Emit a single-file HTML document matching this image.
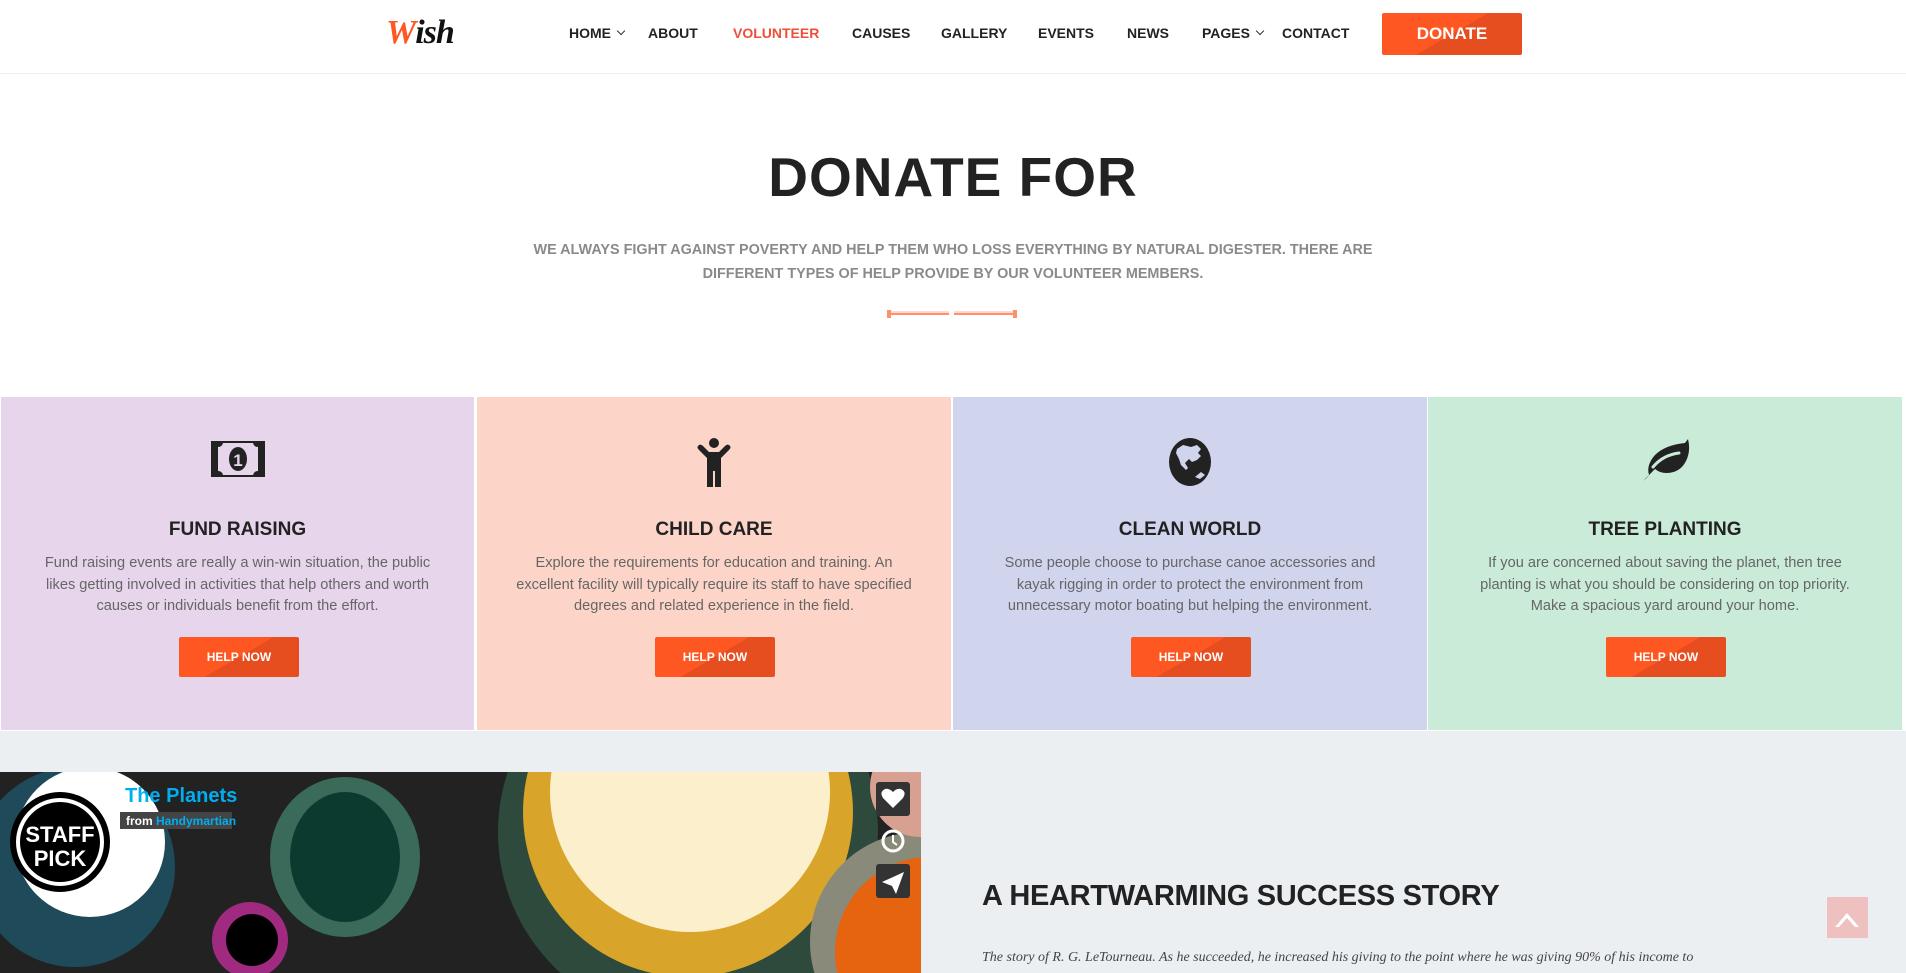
<!DOCTYPE html>
<html><head><meta charset="utf-8"><style>
*{margin:0;padding:0;box-sizing:border-box}
html,body{width:1906px;height:973px;overflow:hidden}
body{background:#fff;font-family:"Liberation Sans",sans-serif;position:relative}
.nav{position:absolute;top:0;left:0;width:1906px;height:74px;border-bottom:1px solid #eee;background:#fff}
.logo{position:absolute;left:386px;top:14px;font:italic bold 34px "Liberation Serif",serif;letter-spacing:-1px;color:#111}
.logo b{color:#ff5722}
.nav a{position:absolute;top:25px;font-weight:bold;font-size:14px;color:#222;text-decoration:none}
.nav a.act{color:#f04e3a}
.caret{display:inline-block;width:6px;height:6px;border-right:1.5px solid #333;border-bottom:1.5px solid #333;transform:rotate(45deg);margin-left:7px;position:relative;top:-4px}
.btn{background:linear-gradient(150deg,#ff5722 0%,#ff5722 50%,#e64d1f 50%,#e64d1f 100%);color:#fff;font-weight:bold;text-align:center;border-radius:2px;position:absolute}
h1{position:absolute;top:145px;left:0;width:1906px;text-align:center;font-size:55px;font-weight:bold;color:#222;letter-spacing:1px}
.sub{position:absolute;top:238px;left:530px;width:846px;text-align:center;font-size:14.4px;font-weight:bold;color:#8a8a8a;line-height:24px}
.card{position:absolute;top:397px;height:333px;width:474px;text-align:center}
.card svg{position:absolute;left:50%;top:40px;transform:translateX(-50%)}
.ct{position:absolute;top:122px;width:100%;font-size:19px;font-weight:bold;color:#222}
.cp{position:absolute;top:156px;left:38px;right:38px;font-size:14.6px;line-height:21.5px;color:#666}
.cb{left:178px;top:240px;width:120px;height:40px;line-height:40px;font-size:12px}
.bottom{position:absolute;top:731px;left:0;width:1906px;height:242px;background:#eceff2;overflow:hidden}
</style></head><body>
<div class="nav">
<div class="logo"><b>W</b>ish</div>
<a style="left:569px">HOME<span class="caret"></span></a>
<a style="left:648px">ABOUT</a>
<a class="act" style="left:733px">VOLUNTEER</a>
<a style="left:852px">CAUSES</a>
<a style="left:941px">GALLERY</a>
<a style="left:1038px">EVENTS</a>
<a style="left:1127px">NEWS</a>
<a style="left:1202px">PAGES<span class="caret"></span></a>
<a style="left:1282px">CONTACT</a>
<div class="btn" style="left:1382px;top:13px;width:140px;height:42px;line-height:42px;font-size:17px">DONATE</div>
</div>
<h1>DONATE FOR</h1>
<div class="sub">WE ALWAYS FIGHT AGAINST POVERTY AND HELP THEM WHO LOSS EVERYTHING BY NATURAL DIGESTER. THERE ARE DIFFERENT TYPES OF HELP PROVIDE BY OUR VOLUNTEER MEMBERS.</div>
<svg style="position:absolute;left:887px;top:309px" width="130" height="10"><path d="M1 1v8M3 1v8M4 5h58M67 5h59M127 1v8M129 1v8" stroke="#ff6a3d" stroke-width="1.5"/><path d="M4 3h58M67 3h59" stroke="#ffb59d" stroke-width="1"/></svg>

<div class="card" style="left:0;background:#e7d5ec;border-left:1px solid #fff">
<svg width="56" height="44" viewBox="0 0 56 44"><rect x="1" y="4" width="54" height="36" fill="#222"/><path d="M8 10q4 0 5-4h30q1 4 5 4v24q-4 0-5 4H13q-1-4-5-4z" fill="#e7d5ec"/><ellipse cx="28" cy="22" rx="9" ry="12" fill="#222"/><text x="28" y="29" font-size="17" font-weight="bold" text-anchor="middle" fill="#e7d5ec" font-family="Liberation Sans">1</text></svg>
<div class="ct">FUND RAISING</div>
<div class="cp">Fund raising events are really a win-win situation, the public likes getting involved in activities that help others and worth causes or individuals benefit from the effort.</div>
<div class="btn cb">HELP NOW</div></div>

<div class="card" style="left:477px;background:#fdd5c8">
<svg width="36" height="52" viewBox="0 0 36 52"><circle cx="18" cy="6" r="5" fill="#222"/><path d="M3 8q-3 2 0 5l8 8v29h6V34h2v16h6V21l8-8q3-3 0-5-2-1-4 1l-6 6H13L7 9Q5 7 3 8z" fill="#222"/></svg>
<div class="ct">CHILD CARE</div>
<div class="cp">Explore the requirements for education and training. An excellent facility will typically require its staff to have specified degrees and related experience in the field.</div>
<div class="btn cb">HELP NOW</div></div>

<div class="card" style="left:953px;background:#d0d4ed">
<svg width="46" height="50" viewBox="0 0 46 50"><ellipse cx="23" cy="25" rx="21" ry="24" fill="#222"/><path d="M10 12l6-4 8 2 6-2 4 4-3 4 3 3-4 4-5 2-3-3-4 4 3 5-2 2-5-5-2-6-3-6z" fill="#d0d4ed"/><path d="M28 40l6-5 4 3-5 4z" fill="#d0d4ed"/></svg>
<div class="ct">CLEAN WORLD</div>
<div class="cp">Some people choose to purchase canoe accessories and kayak rigging in order to protect the environment from unnecessary motor boating but helping the environment.</div>
<div class="btn cb">HELP NOW</div></div>

<div class="card" style="left:1428px;background:#c9ebd8">
<svg width="52" height="46" viewBox="0 0 52 46"><path d="M4 44l6-6q-3-10 6-20 10-10 30-12l3-4q3 12-2 22-6 12-20 12-6 0-11-4l-5 5q-3 4-7 7z" fill="#222"/><path d="M14 30q10-12 26-14" stroke="#c9ebd8" stroke-width="3" fill="none" stroke-linecap="round"/></svg>
<div class="ct">TREE PLANTING</div>
<div class="cp">If you are concerned about saving the planet, then tree planting is what you should be considering on top priority. Make a spacious yard around your home.</div>
<div class="btn cb">HELP NOW</div></div>

<div class="bottom">
<svg style="position:absolute;left:0;top:41px" width="921" height="201">
<rect width="921" height="201" fill="#222"/>
<circle cx="75" cy="95" r="100" fill="#1e4a5a"/><circle cx="90" cy="70" r="75" fill="#fff"/>
<ellipse cx="345" cy="85" rx="75" ry="80" fill="#3a6b5a"/><ellipse cx="345" cy="85" rx="55" ry="65" fill="#0d3a2e"/>
<circle cx="250" cy="168" r="38" fill="#a02a80"/><circle cx="252" cy="168" r="26" fill="#000"/>
<circle cx="688" cy="60" r="190" fill="#2e4a3c"/><circle cx="688" cy="40" r="165" fill="#d9a42a"/><circle cx="690" cy="20" r="140" fill="#fbefcc"/>
<circle cx="920" cy="170" r="110" fill="#8a8a7a"/><circle cx="930" cy="180" r="95" fill="#e6630f"/>
<circle cx="920" cy="15" r="50" fill="#d8a090"/>
<circle cx="60" cy="70" r="50" fill="#000"/><circle cx="60" cy="70" r="44" fill="#fff"/><circle cx="60" cy="70" r="40" fill="#000"/>
<text x="60" y="70" fill="#fff" font-size="22" font-weight="bold" text-anchor="middle" font-family="Liberation Sans">STAFF</text>
<text x="60" y="94" fill="#fff" font-size="22" font-weight="bold" text-anchor="middle" font-family="Liberation Sans">PICK</text>
<text x="125" y="30" fill="#00adef" font-size="20" font-weight="bold" font-family="Liberation Sans">The Planets</text>
<rect x="120" y="40" width="112" height="17" fill="#444"/>
<text x="126" y="53" fill="#fff" font-size="12" font-weight="bold" font-family="Liberation Sans">from <tspan fill="#00adef">Handymartian</tspan></text>
<rect x="876" y="10" width="34" height="34" rx="3" fill="#333"/><path d="M893 36l-10-10q-4-6 2-9 4-1 8 3 4-4 8-3 6 3 2 9z" fill="#fff"/>
<circle cx="893" cy="69" r="10" fill="none" stroke="#fff" stroke-width="3"/><path d="M893 63v7l4 3" stroke="#fff" stroke-width="2" fill="none"/>
<rect x="876" y="92" width="34" height="34" rx="3" fill="#333"/><path d="M882 110l22-10-8 22-4-8z" fill="#fff"/>
</svg>
<div style="position:absolute;left:982px;top:149px;font-size:29px;font-weight:bold;color:#222;letter-spacing:-0.3px">A HEARTWARMING SUCCESS STORY</div>
<div style="position:absolute;left:982px;top:219px;font:italic 14px 'Liberation Serif',serif;color:#444;white-space:nowrap">The story of R. G. LeTourneau. As he succeeded, he increased his giving to the point where he was giving 90% of his income to</div>
<div style="position:absolute;left:1827px;top:166px;width:41px;height:41px;background:#efc0c0"><svg width="41" height="41"><path d="M8 30l12-14 12 14-4 0-8-9-8 9z" fill="#fff"/></svg></div>
</div>
</body></html>
